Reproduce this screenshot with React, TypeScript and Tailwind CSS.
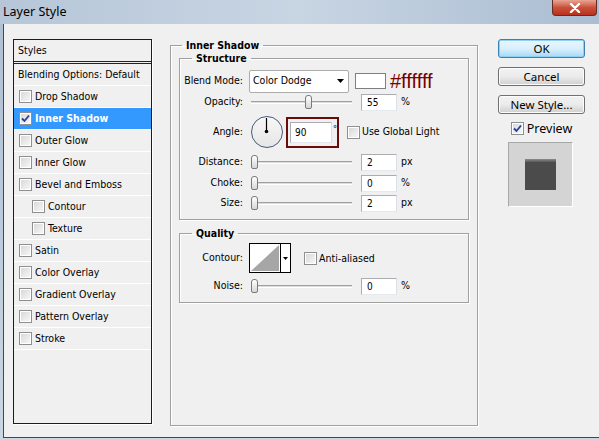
import type { ReactNode } from "react";

type StyleItem = {
  label: string;
  checked?: boolean;
  active?: boolean;
  indent?: boolean;
};

const styleItems: StyleItem[] = [
  { label: "Drop Shadow" },
  { label: "Inner Shadow", checked: true, active: true },
  { label: "Outer Glow" },
  { label: "Inner Glow" },
  { label: "Bevel and Emboss" },
  { label: "Contour", indent: true },
  { label: "Texture", indent: true },
  { label: "Satin" },
  { label: "Color Overlay" },
  { label: "Gradient Overlay" },
  { label: "Pattern Overlay" },
  { label: "Stroke" },
];

const uiFont = { fontFamily: '"DejaVu Sans Condensed", "DejaVu Sans", sans-serif' };
const segoe = { fontFamily: '"Noto Sans", "Open Sans", sans-serif' };

function Checkbox({ checked }: { checked?: boolean }) {
  return (
    <span className="flex h-[13px] w-[13px] shrink-0 items-center justify-center border border-[#8e8f8f] bg-white">
      <span className="flex h-[9px] w-[9px] items-center justify-center bg-gradient-to-br from-[#d9d9d9] to-[#f6f6f6]">
        {checked && (
          <svg width="9" height="9" viewBox="0 0 9 9">
            <path d="M1 4.5 L3.5 7 L8 1.5" fill="none" stroke="#21409a" strokeWidth="1.8" />
          </svg>
        )}
      </span>
    </span>
  );
}

function Slider({ pos }: { pos: number }) {
  return (
    <div className="flex h-[16px] w-[101px] items-center">
      <div className="h-[3px] flex-1 border-t border-[#a0a0a0] border-b border-b-white bg-[#dcdcdc]" />
      <div className="absolute" style={{ marginLeft: pos }}>
        <div className="h-[14px] w-[7px] rounded-t-[3px] rounded-b-[2px] border border-[#7a7a7a] bg-gradient-to-b from-white to-[#d6d6d6]" />
      </div>
    </div>
  );
}

function NumberBox({ value }: { value: string }) {
  return (
    <div className="flex h-[17px] w-[36px] items-center border border-[#abadb3] border-r-[#dbdfe6] border-b-[#e3e9ef] bg-white pl-[5px] text-[10px] text-black">
      {value}
    </div>
  );
}

function Label({ children }: { children: ReactNode }) {
  return <div className="w-[64px] shrink-0 pr-[1px] text-right">{children}</div>;
}

function SliderRow({ label, value, unit, pos }: { label: string; value: string; unit: string; pos: number }) {
  return (
    <div className="flex h-[18px] items-center">
      <Label>{label}</Label>
      <div className="relative ml-[7px] flex items-center">
        <Slider pos={pos} />
      </div>
      <div className="ml-[9px]">
        <NumberBox value={value} />
      </div>
      <div className="ml-[4px]">{unit}</div>
    </div>
  );
}

function Button({ children, primary }: { children: ReactNode; primary?: boolean }) {
  return (
    <div
      className={`flex h-[19px] w-[87px] items-center justify-center rounded-[3px] border text-[11.5px] text-black ${
        primary
          ? "border-[#3c7fb1] bg-gradient-to-b from-[#eaf6fd] via-[#d9f0fc] to-[#a7d9f5] shadow-[inset_0_0_0_1px_#8ed1f5]"
          : "border-[#707070] bg-gradient-to-b from-[#f2f2f2] via-[#ebebeb] to-[#cfcfcf] shadow-[inset_0_0_0_1px_#fcfcfc]"
      }`}
      style={segoe}
    >
      {children}
    </div>
  );
}

export default function App() {
  return (
    <div className="flex h-[439px] w-[599px] flex-col overflow-hidden bg-gradient-to-b from-[#aebfd2] to-[#c9d6e4]">
      {/* title bar */}
      <div className="flex h-[24px] shrink-0 items-start justify-between bg-gradient-to-r from-[#b6c6d8] via-[#c8d5e3] to-[#aabdd2]">
        <div className="pl-[3px] pt-[3px] text-[12.5px] text-black" style={segoe}>
          Layer Style
        </div>
        <div className="mr-[2px] flex h-[16px] w-[45px] items-center justify-center rounded-b-[4px] border border-t-0 border-[#6b2a20] bg-gradient-to-b from-[#e8a493] via-[#c9503a] to-[#b8301c]">
          <svg width="12" height="10" viewBox="0 0 12 10">
            <path d="M2 1 L10 9 M10 1 L2 9" stroke="white" strokeWidth="2.4" strokeLinecap="round" />
          </svg>
        </div>
      </div>

      {/* client */}
      <div
        className="ml-[3px] flex h-[414px] border-l border-b border-[#3f4853] bg-[#f0f0f0] text-[10.5px] text-black"
        style={uiFont}
      >
        {/* styles list */}
        <div className="ml-[9px] mt-[15px] h-[385px] w-[139px] border border-[#1c1c1c] shadow-[1px_1px_0_#ffffff]">
          <div className="flex h-[24px] items-center border-b-[3px] border-double border-[#222] pl-[4px]">Styles</div>
          <div className="flex h-[22px] items-center border-b border-white pl-[4px]">Blending Options: Default</div>
          {styleItems.map((item) => (
            <div
              key={item.label}
              className={`flex h-[22px] items-center gap-[3px] border-b border-white ${
                item.indent ? "pl-[18px]" : "pl-[5px]"
              } ${item.active ? "bg-[#3399ff] font-bold text-white" : ""}`}
            >
              <Checkbox checked={item.checked} />
              <span>{item.label}</span>
            </div>
          ))}
        </div>

        {/* inner shadow panel */}
        <fieldset className="ml-[18px] mt-[15px] h-[387px] w-[308px] border border-[#a0a0a0] p-0 shadow-[inset_1px_1px_0_#ffffff,1px_1px_0_#ffffff]">
          <legend className="ml-[11px] px-[4px] text-[10.5px] font-bold leading-[13px]">Inner Shadow</legend>

          <fieldset className="mx-[8px] h-[168px] border border-[#a0a0a0] p-0 shadow-[inset_1px_1px_0_#ffffff,1px_1px_0_#ffffff]">
            <legend className="ml-[12px] px-[4px] font-bold leading-[13px]">Structure</legend>

            <div className="mt-[4px] flex h-[24px] items-center">
              <Label>Blend Mode:</Label>
              <div className="ml-[5px] flex h-[23px] w-[100px] items-center justify-between rounded-[2px] border border-[#acacac] bg-white pl-[3px] pr-[4px]">
                <span>Color Dodge</span>
                <svg width="7" height="4" viewBox="0 0 7 4">
                  <path d="M0 0 H7 L3.5 4 Z" fill="#000" />
                </svg>
              </div>
              <div className="ml-[6px] h-[16px] w-[31px] border border-[#7f7f7f] bg-white" />
              <div className="ml-[4px] text-[20px] leading-none text-[#770000]" style={{ fontFamily: '"Liberation Sans", sans-serif' }}>
                #ffffff
              </div>
            </div>

            <div className="mt-[0px]">
              <SliderRow label="Opacity:" value="55" unit="%" pos={54} />
            </div>

            <div className="mt-[3px] flex h-[36px] items-center">
              <Label>Angle:</Label>
              <div className="relative ml-[7px] h-[32px] w-[32px] rounded-full border-[1.5px] border-[#475a78] bg-gradient-to-b from-[#f7f7f7] to-[#e6e6e6]">
                <svg className="absolute left-0 top-0" width="29" height="29" viewBox="0 0 29 29">
                  <line x1="14.5" y1="14.5" x2="14.5" y2="1" stroke="#000" strokeWidth="1.2" />
                  <circle cx="14.5" cy="14.5" r="1.8" fill="#000" />
                </svg>
              </div>
              <div className="ml-[3px] flex h-[31px] w-[53px] items-center border-2 border-[#6b0c0c] pl-[2px]">
                <div className="flex h-[21px] w-[42px] items-center border border-[#abadb3] border-b-[#e3e9ef] border-r-[#dbdfe6] bg-white pl-[4px] text-[10px]">
                  90
                </div>
                <span className="ml-[1px] self-start pt-[4px] text-[9px]">°</span>
              </div>
              <div className="ml-[8px] flex items-center gap-[2px]">
                <Checkbox />
                <span>Use Global Light</span>
              </div>
            </div>

            <div className="mt-[3px]">
              <SliderRow label="Distance:" value="2" unit="px" pos={0} />
            </div>
            <div className="mt-[3px]">
              <SliderRow label="Choke:" value="0" unit="%" pos={0} />
            </div>
            <div className="mt-[2px]">
              <SliderRow label="Size:" value="2" unit="px" pos={0} />
            </div>
          </fieldset>

          <fieldset className="mx-[8px] mt-[7px] h-[76px] border border-[#a0a0a0] p-0 shadow-[inset_1px_1px_0_#ffffff,1px_1px_0_#ffffff]">
            <legend className="ml-[12px] px-[4px] font-bold leading-[13px]">Quality</legend>

            <div className="mt-[3px] flex h-[30px] items-center">
              <Label>Contour:</Label>
              <div className="ml-[5px] flex h-[30px] w-[42px] border border-black bg-white">
                <svg width="30" height="28" viewBox="0 0 30 28" className="shrink-0">
                  <path d="M1 27 L29 1 V27 Z" fill="#a6a6a6" />
                </svg>
                <div className="flex flex-1 items-center justify-center border-l border-black">
                  <svg width="5" height="3" viewBox="0 0 5 3">
                    <path d="M0 0 H5 L2.5 3 Z" fill="#000" />
                  </svg>
                </div>
              </div>
              <div className="ml-[13px] flex items-center gap-[2px] self-start pt-[8px]">
                <Checkbox />
                <span>Anti-aliased</span>
              </div>
            </div>

            <div className="mt-[4px]">
              <SliderRow label="Noise:" value="0" unit="%" pos={0} />
            </div>
          </fieldset>
        </fieldset>

        {/* buttons */}
        <div className="ml-[20px] mt-[15px] flex w-[87px] flex-col">
          <Button primary>OK</Button>
          <div className="mt-[9px]">
            <Button>Cancel</Button>
          </div>
          <div className="mt-[9px]">
            <Button>New Style...</Button>
          </div>
          <div className="mt-[7px] flex items-center justify-center gap-[3px] text-[12.5px]" style={segoe}>
            <Checkbox checked />
            <span className="leading-[15px]">Preview</span>
          </div>
          <div className="ml-[10px] mt-[6px] flex h-[65px] w-[65px] items-center justify-center border border-[#a9a9a9] border-b-white border-r-white bg-[#d4d4d4]">
            <div className="flex h-[31px] w-[31px] flex-col bg-[#4b4b4b]">
              <div className="h-[3px] bg-gradient-to-b from-[#8c8c8c] to-[#5a5a5a]" />
            </div>
          </div>
        </div>
      </div>
    </div>
  );
}
